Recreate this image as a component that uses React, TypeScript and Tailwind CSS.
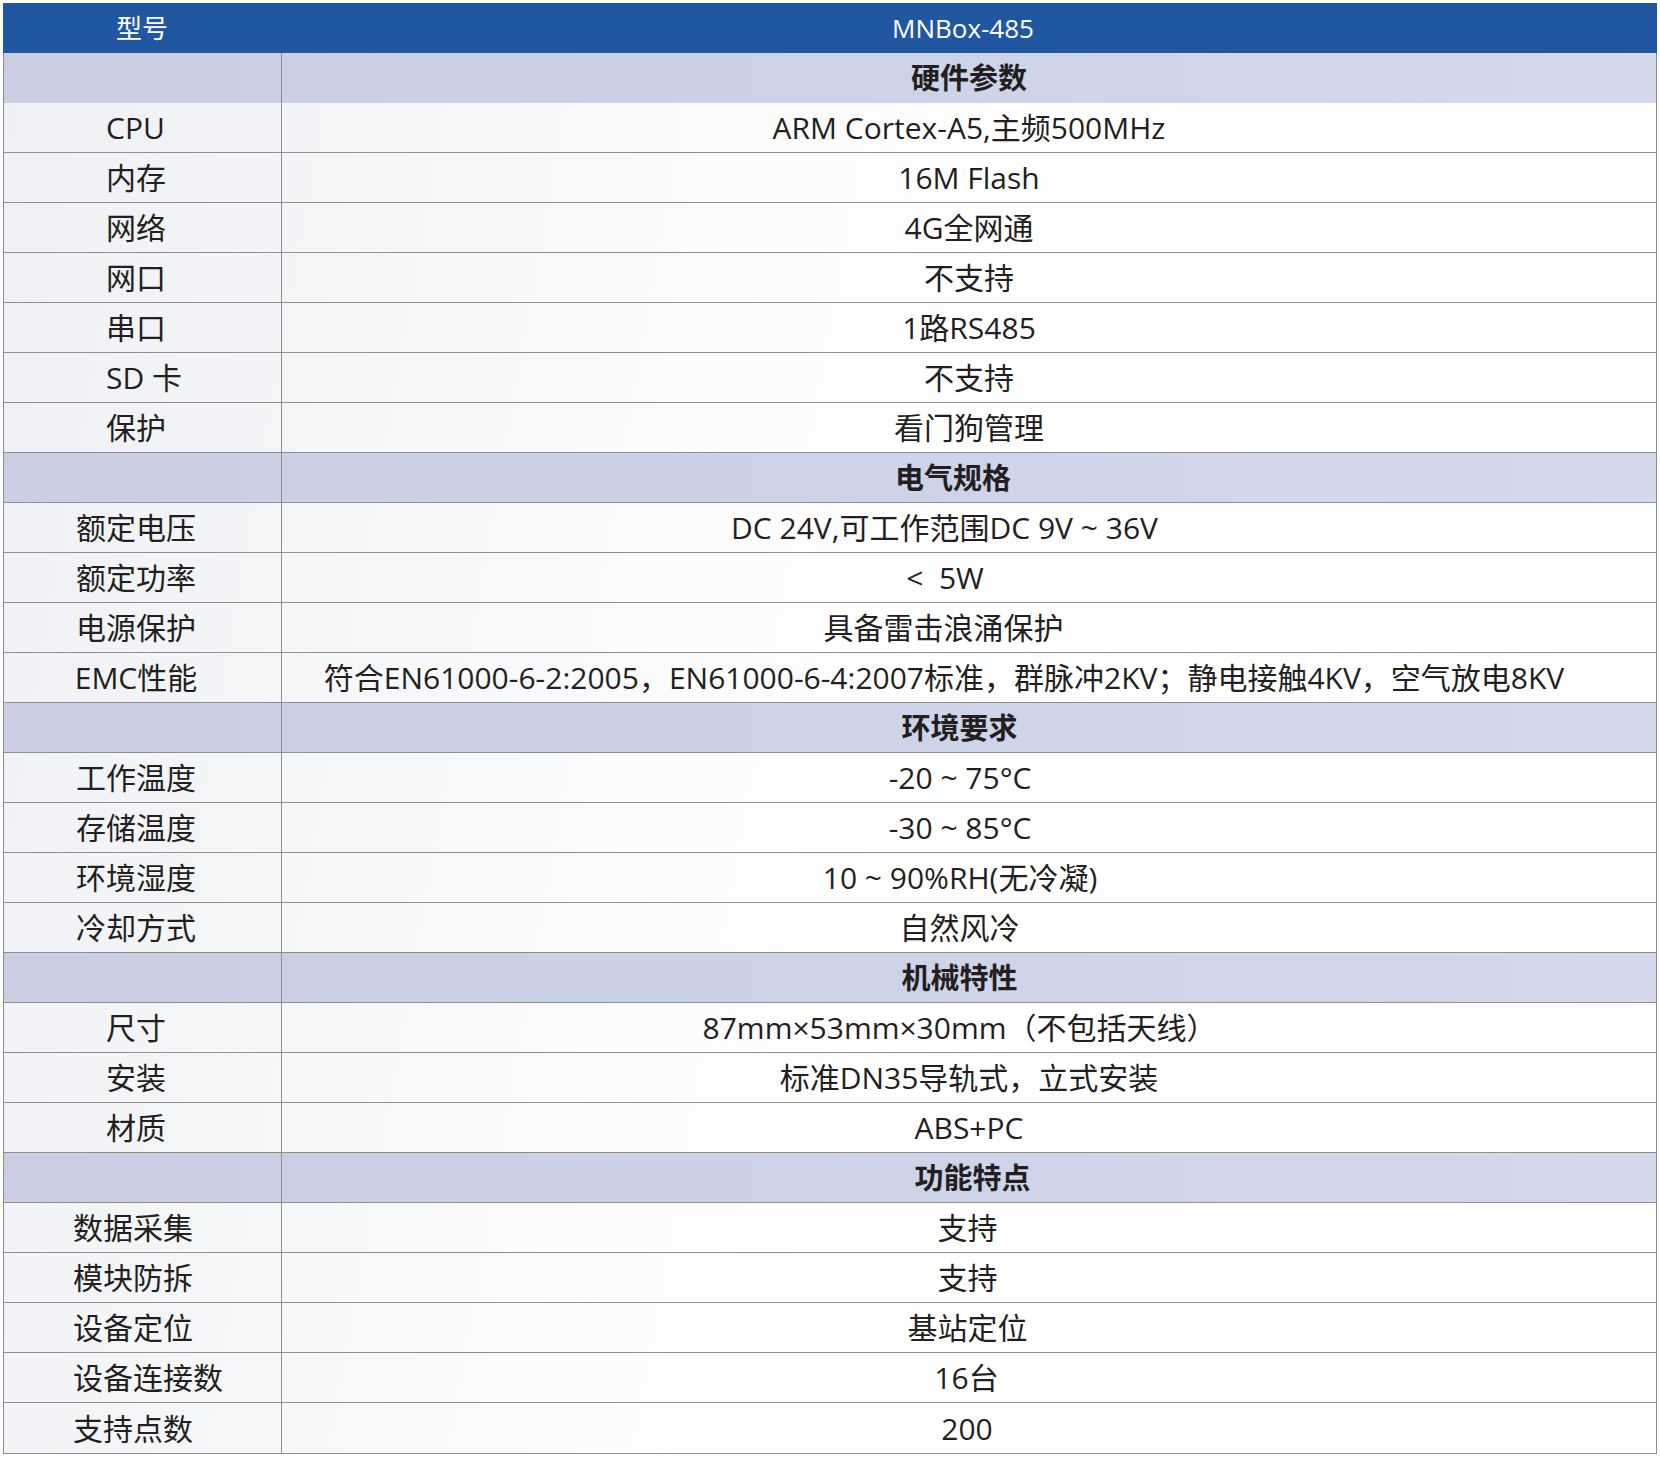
import React from "react";

type Row =
  | { kind: "section"; title: string; off?: string }
  | { kind: "row"; label: string; value: string; off?: string; lab?: string };

const L1 = "justify-start pl-[102px]";
const L4 = "justify-start pl-[69px]";

const rows: Row[] = [
  { kind: "section", title: "硬件参数" },
  { kind: "row", label: "CPU", value: "ARM Cortex-A5,主频500MHz", lab: L1 },
  { kind: "row", label: "内存", value: "16M Flash", lab: L1 },
  { kind: "row", label: "网络", value: "4G全网通", lab: L1 },
  { kind: "row", label: "网口", value: "不支持", lab: L1 },
  { kind: "row", label: "串口", value: "1路RS485", lab: L1 },
  { kind: "row", label: "SD 卡", value: "不支持", lab: L1 },
  { kind: "row", label: "保护", value: "看门狗管理", lab: L1 },
  { kind: "section", title: "电气规格", off: "pr-[32px]" },
  { kind: "row", label: "额定电压", value: "DC 24V,可工作范围DC 9V ~ 36V", off: "pr-[49px]" },
  { kind: "row", label: "额定功率", value: "<\u00a0 5W", off: "pr-[48px]" },
  { kind: "row", label: "电源保护", value: "具备雷击浪涌保护", off: "pr-[51px]" },
  { kind: "row", label: "EMC性能", value: "符合EN61000-6-2:2005，EN61000-6-4:2007标准，群脉冲2KV；静电接触4KV，空气放电8KV", off: "pr-[50px]" },
  { kind: "section", title: "环境要求", off: "pr-[19px]" },
  { kind: "row", label: "工作温度", value: "-20 ~ 75°C", off: "pr-[18px]" },
  { kind: "row", label: "存储温度", value: "-30 ~ 85°C", off: "pr-[18px]" },
  { kind: "row", label: "环境湿度", value: "10 ~ 90%RH(无冷凝)", off: "pr-[18px]" },
  { kind: "row", label: "冷却方式", value: "自然风冷", off: "pr-[19px]" },
  { kind: "section", title: "机械特性", off: "pr-[19px]" },
  { kind: "row", label: "尺寸", value: "87mm×53mm×30mm（不包括天线）", off: "pr-[19px]" },
  { kind: "row", label: "安装", value: "标准DN35导轨式，立式安装" },
  { kind: "row", label: "材质", value: "ABS+PC" },
  { kind: "section", title: "功能特点", off: "pl-[7px]" },
  { kind: "row", label: "数据采集", value: "支持", lab: L4, off: "pr-[3px]" },
  { kind: "row", label: "模块防拆", value: "支持", lab: L4, off: "pr-[3px]" },
  { kind: "row", label: "设备定位", value: "基站定位", lab: L4, off: "pr-[3px]" },
  { kind: "row", label: "设备连接数", value: "16台", lab: L4, off: "pr-[5px]" },
  { kind: "row", label: "支持点数", value: "200", lab: L4, off: "pr-[4px]" },
];

const font = {
  fontFamily: '"Open Sans", "Noto Sans CJK SC", "Noto Sans", sans-serif',
};

export default function App() {
  return (
    <div className="w-[1660px] h-[1460px] bg-white pt-[3px] pl-[3px]" style={font}>
      <div className="w-[1654px] border-b border-l border-r border-[#8f8f8f] bg-[linear-gradient(100deg,#eef0f4_0%,#f4f6f8_22%,#fbfbfc_40%,#ffffff_55%)]">
        <div className="grid grid-cols-[278px_1fr] h-[50px] bg-[#2057a0] text-white text-[26px] items-center -mx-px">
          <div className="text-center">型号</div>
          <div className="text-center pr-[12px]">MNBox-485</div>
        </div>
        {rows.map((r, i) => {
          const last = i === rows.length - 1;
          if (r.kind === "section") {
            return (
              <div
                key={i}
                className={`grid grid-cols-[278px_1fr] h-[50px] bg-[linear-gradient(90deg,#c9cee3_0%,#ccd2e6_40%,#d4d9eb_100%)] text-[#231f20] text-[29px] font-bold ${
                  i === 0 ? "" : "border-b border-[#8f8f8f]"
                }`}
              >
                <div className="border-r border-[#8f8f8f]" />
                <div className={`flex items-center justify-center ${r.off ?? ""}`}>{r.title}</div>
              </div>
            );
          }
          return (
            <div
              key={i}
              className={`grid grid-cols-[278px_1fr] h-[50px] text-[#231f20] text-[30px] ${
                last ? "" : "border-b border-[#8f8f8f]"
              }`}
            >
              <div
                className={`border-r border-[#8f8f8f] flex items-center whitespace-nowrap ${
                  r.lab ?? "justify-center pr-[13px]"
                }`}
              >
                {r.label}
              </div>
              <div className={`flex items-center justify-center whitespace-nowrap ${r.off ?? ""}`}>{r.value}</div>
            </div>
          );
        })}
      </div>
    </div>
  );
}
